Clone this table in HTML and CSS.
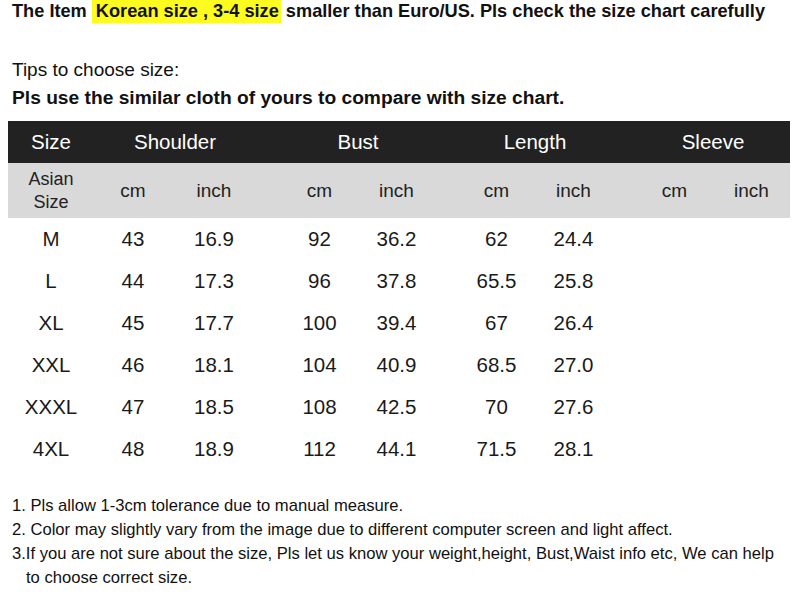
FILE: index.html
```html
<!DOCTYPE html>
<html>
<head>
<meta charset="utf-8">
<link rel="stylesheet" href="styles.css">
</head>
<body>
<div class="page">
  <p class="title">The Item <span class="hl">Korean size , 3-4 size</span> smaller than Euro/US. Pls check the size chart carefully</p>
  <p class="tips">Tips to choose size:</p>
  <p class="advice">Pls use the similar cloth of yours to compare with size chart.</p>
  <table class="chart">
    <colgroup>
      <col class="w-size"><col class="w-a"><col class="w-b">
      <col class="w-s1"><col class="w-c"><col class="w-c">
      <col class="w-s2"><col class="w-c"><col class="w-c">
      <col class="w-s3"><col class="w-c"><col class="w-c">
    </colgroup>
    <thead>
      <tr class="head">
        <th>Size</th><th colspan="2">Shoulder</th>
        <th></th><th colspan="2">Bust</th>
        <th></th><th colspan="2">Length</th>
        <th></th><th colspan="2">Sleeve</th>
      </tr>
      <tr class="units">
        <th class="asian">Asian<br>Size</th><th>cm</th><th>inch</th>
        <th></th><th>cm</th><th>inch</th>
        <th></th><th>cm</th><th>inch</th>
        <th></th><th>cm</th><th>inch</th>
      </tr>
    </thead>
    <tbody>
      <tr><td>M</td><td>43</td><td>16.9</td><td></td><td>92</td><td>36.2</td><td></td><td>62</td><td>24.4</td><td></td><td></td><td></td></tr>
      <tr><td>L</td><td>44</td><td>17.3</td><td></td><td>96</td><td>37.8</td><td></td><td>65.5</td><td>25.8</td><td></td><td></td><td></td></tr>
      <tr><td>XL</td><td>45</td><td>17.7</td><td></td><td>100</td><td>39.4</td><td></td><td>67</td><td>26.4</td><td></td><td></td><td></td></tr>
      <tr><td>XXL</td><td>46</td><td>18.1</td><td></td><td>104</td><td>40.9</td><td></td><td>68.5</td><td>27.0</td><td></td><td></td><td></td></tr>
      <tr><td>XXXL</td><td>47</td><td>18.5</td><td></td><td>108</td><td>42.5</td><td></td><td>70</td><td>27.6</td><td></td><td></td><td></td></tr>
      <tr><td>4XL</td><td>48</td><td>18.9</td><td></td><td>112</td><td>44.1</td><td></td><td>71.5</td><td>28.1</td><td></td><td></td><td></td></tr>
    </tbody>
  </table>
  <ol class="notes">
    <li>1. Pls allow 1-3cm tolerance due to manual measure.</li>
    <li>2. Color may slightly vary from the image due to different computer screen and light affect.</li>
    <li>3.If you are not sure about the size, Pls let us know your weight,height, Bust,Waist info etc, We can help<br><span class="indent">to choose correct size.</span></li>
  </ol>
</div>
</body>
</html>
```

FILE: styles.css
```css
html, body {
  margin: 0;
  padding: 0;
  background: #fff;
}
.page {
  width: 800px;
  height: 595px;
  overflow: hidden;
  font-family: "Liberation Sans", Arial, sans-serif;
  color: #111;
}
p { margin: 0; }
.title {
  font-weight: bold;
  font-size: 18.2px;
  line-height: 23px;
  padding-left: 12px;
  white-space: nowrap;
}
.hl {
  background: #fdfc1e;
  padding: 2px 2px 2px 4px;
}
.tips {
  margin-top: 33px;
  padding-left: 12px;
  font-size: 19px;
  line-height: 28px;
}
.advice {
  padding-left: 12px;
  font-size: 19.2px;
  font-weight: bold;
  line-height: 28px;
}
.chart {
  margin: 9px 0 0 8px;
  border-collapse: collapse;
  table-layout: fixed;
  width: 782px;
  font-size: 20.5px;
  color: #1a1a1a;
}
.w-size { width: 86px; }
.w-a { width: 78px; }
.w-b { width: 84px; }
.w-s1 { width: 25px; }
.w-s2 { width: 23px; }
.w-s3 { width: 24px; }
.w-c { width: 77px; }
.chart th, .chart td {
  padding: 0;
  text-align: center;
  font-weight: normal;
  white-space: nowrap;
}
.head {
  background: #222;
  color: #fff;
  height: 42px;
}
.units {
  background: #d9d9d9;
  color: #222;
  height: 55px;
  font-size: 19px;
}
.units .asian {
  font-size: 18px;
  line-height: 23px;
}
.chart tbody tr { height: 42px; }
.notes {
  list-style: none;
  margin: 24px 0 0 0;
  padding: 0 0 0 12px;
  font-size: 16.6px;
  line-height: 24px;
  color: #111;
}
.indent { padding-left: 14px; }
```
